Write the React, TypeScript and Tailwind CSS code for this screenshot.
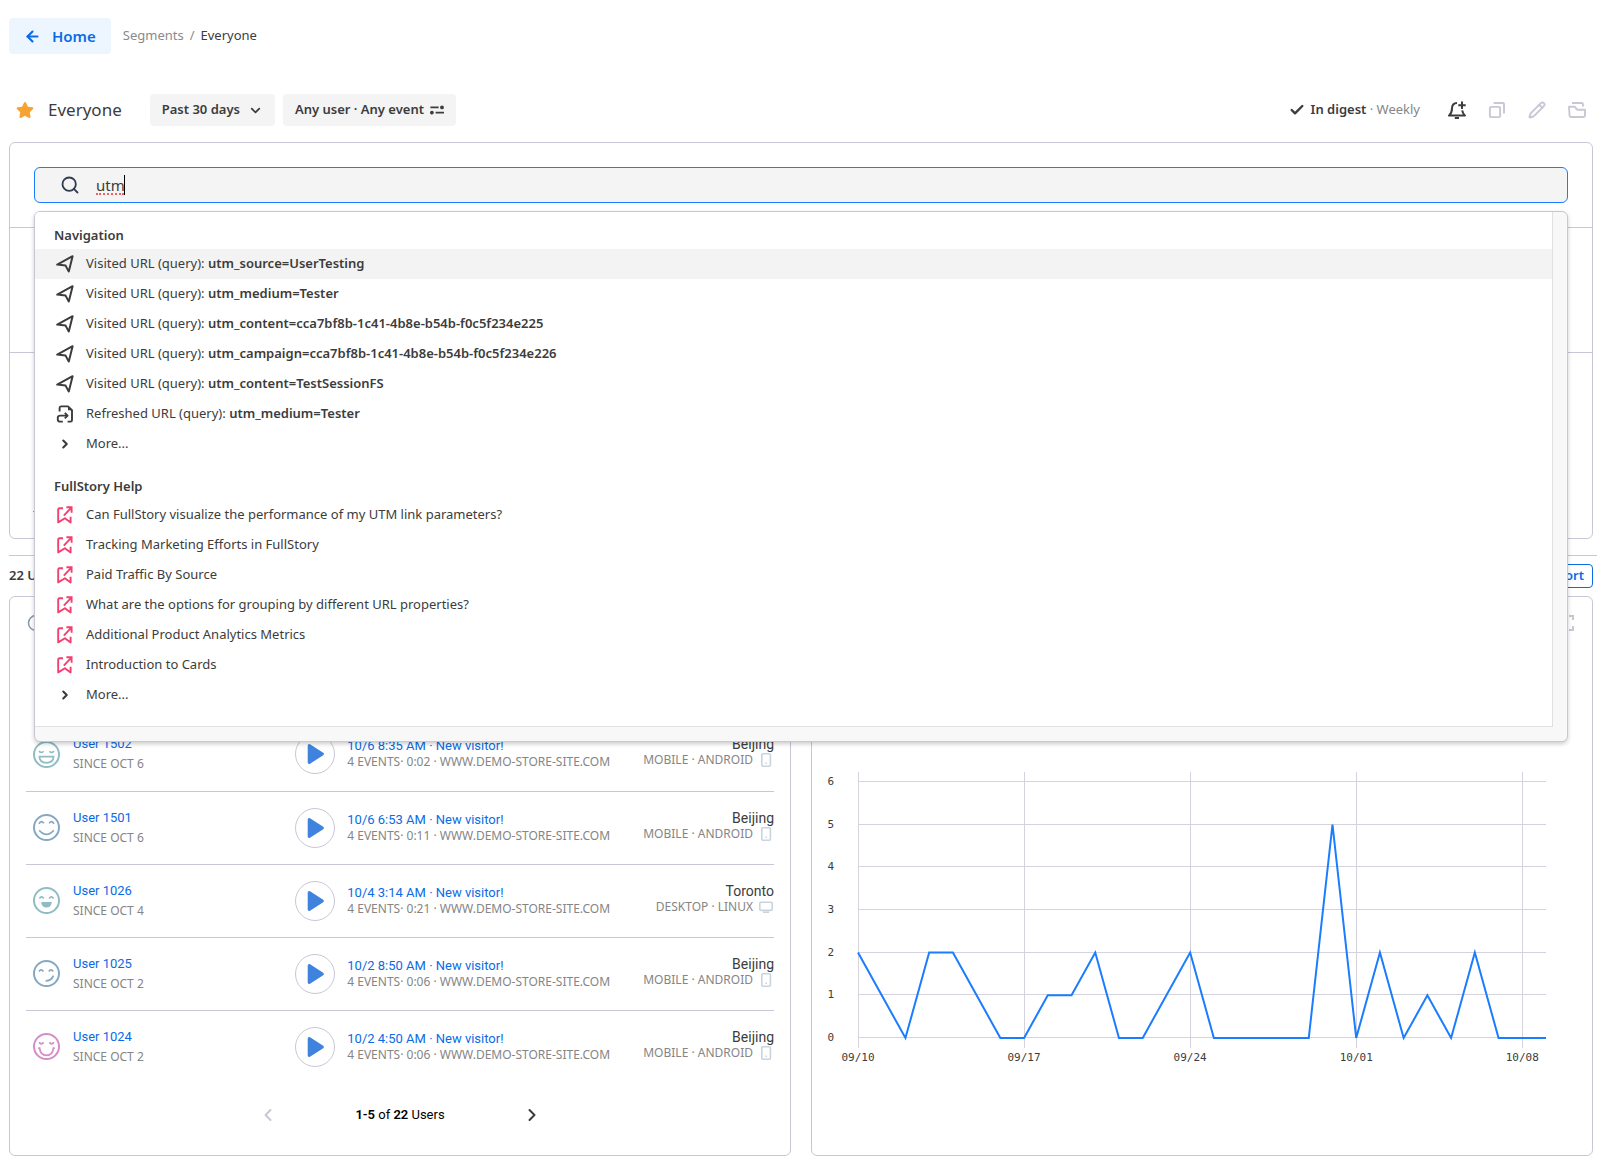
import type { ReactNode } from "react";
import { ArrowLeft, Check, ChevronDown, ChevronLeft, ChevronRight, Clock, Pencil, Search } from "lucide-react";
import { FaStar } from "react-icons/fa";

type Face = "grin" | "smile" | "laugh" | "smirk" | "joy";

const navigation = [
	{ label: "Visited URL (query):", value: "utm_source=UserTesting", kind: "visit" },
	{ label: "Visited URL (query):", value: "utm_medium=Tester", kind: "visit" },
	{ label: "Visited URL (query):", value: "utm_content=cca7bf8b-1c41-4b8e-b54b-f0c5f234e225", kind: "visit" },
	{ label: "Visited URL (query):", value: "utm_campaign=cca7bf8b-1c41-4b8e-b54b-f0c5f234e226", kind: "visit" },
	{ label: "Visited URL (query):", value: "utm_content=TestSessionFS", kind: "visit" },
	{ label: "Refreshed URL (query):", value: "utm_medium=Tester", kind: "refresh" },
];

const help = [
	"Can FullStory visualize the performance of my UTM link parameters?",
	"Tracking Marketing Efforts in FullStory",
	"Paid Traffic By Source",
	"What are the options for grouping by different URL properties?",
	"Additional Product Analytics Metrics",
	"Introduction to Cards",
];

const users: {
	name: string;
	since: string;
	face: Face;
	color: string;
	time: string;
	length: string;
	city: string;
	device: string;
}[] = [
	{ name: "User 1502", since: "OCT 6", face: "grin", color: "text-[#8fbdc3]", time: "10/6 8:35 AM", length: "0:02", city: "Beijing", device: "MOBILE · ANDROID" },
	{ name: "User 1501", since: "OCT 6", face: "smile", color: "text-[#86a8c2]", time: "10/6 6:53 AM", length: "0:11", city: "Beijing", device: "MOBILE · ANDROID" },
	{ name: "User 1026", since: "OCT 4", face: "laugh", color: "text-[#8fbdc3]", time: "10/4 3:14 AM", length: "0:21", city: "Toronto", device: "DESKTOP · LINUX" },
	{ name: "User 1025", since: "OCT 2", face: "smirk", color: "text-[#86a8c2]", time: "10/2 8:50 AM", length: "0:06", city: "Beijing", device: "MOBILE · ANDROID" },
	{ name: "User 1024", since: "OCT 2", face: "joy", color: "text-[#d68cc6]", time: "10/2 4:50 AM", length: "0:06", city: "Beijing", device: "MOBILE · ANDROID" },
];

// users per day, 09/10 to 10/09
const daily = [2, 1, 0, 2, 2, 1, 0, 0, 1, 1, 2, 0, 0, 1, 2, 0, 0, 0, 0, 0, 5, 0, 2, 0, 1, 0, 2, 0, 0, 0];
const weeks = ["09/10", "09/17", "09/24", "10/01", "10/08"];

const chartLeft = 46;
const chartRight = 734;
const chartBase = 320;
const dayStep = (chartRight - chartLeft) / (daily.length - 1);
const unitStep = 42.7;

function VisitIcon() {
	return (
		<svg width="18" height="18" viewBox="0 0 18 18" fill="none" stroke="currentColor" strokeWidth="2" strokeLinejoin="round" aria-hidden="true">
			<path d="M1.2 9.6 16.6 1.2 12.8 16.6 9.6 10.6Z" />
		</svg>
	);
}

function RefreshIcon() {
	return (
		<svg width="18" height="18" viewBox="0 0 18 18" fill="none" stroke="currentColor" strokeWidth="1.9" strokeLinejoin="round" aria-hidden="true">
			<path d="M3.6 6.6V3Q3.6 1.4 5 1.4H12L16 5.2V15Q16 16.6 14.6 16.6H11.6" />
			<path d="M6.8 16.6H4.4Q1.8 16.6 1.8 14.8V12.6Q1.8 10.6 4.4 10.6H11" />
			<path d="M8.8 7.8 11.6 10.6 8.8 13.4" />
			<path d="M12 1.4V5.2H16Z" fill="currentColor" stroke="none" />
		</svg>
	);
}

function HelpIcon() {
	return (
		<svg width="18" height="18" viewBox="0 0 18 18" fill="none" stroke="#f43f70" strokeWidth="1.9" aria-hidden="true">
			<path d="M7 2.2H3.6Q2.2 2.2 2.2 3.6V16.4L8.9 12.2 14.6 16.4V10.8" strokeLinejoin="round" />
			<path d="M7.8 9.6 15.4 1.6M10.4 1.2H15.6V6.8" />
		</svg>
	);
}

function FilterIcon() {
	return (
		<svg width="14" height="10" viewBox="0 0 14 10" stroke="currentColor" strokeWidth="1.8" aria-hidden="true">
			<path d="M.4 2.4H8.6M5.6 7.6H14" />
			<circle cx="12" cy="2.4" r="1" fill="currentColor" />
			<circle cx="1.9" cy="7.6" r="1" fill="currentColor" />
		</svg>
	);
}

function BellPlusIcon() {
	return (
		<svg width="18" height="18" viewBox="0 0 18 18" fill="none" stroke="currentColor" strokeWidth="2" aria-hidden="true">
			<path d="M9 2C5.4 2.2 4 4.4 4 7.4C4 11 3.4 12.2 1 14.6H17C15.2 12.8 14.4 11.6 14.2 9.4" strokeLinejoin="round" />
			<path d="M14 .6V8M10.3 4.3H17.7M6.8 17.1H11" />
		</svg>
	);
}

function CopyIcon() {
	return (
		<svg width="18" height="18" viewBox="0 0 18 18" fill="none" stroke="currentColor" strokeWidth="1.9" aria-hidden="true">
			<rect x="1.9" y="5.9" width="10.2" height="10.2" rx="1" />
			<path d="M5.6 2H15Q16 2 16 3V12.4" />
		</svg>
	);
}

function FolderIcon() {
	return (
		<svg width="18" height="18" viewBox="0 0 18 18" fill="none" stroke="currentColor" strokeWidth="1.9" aria-hidden="true">
			<path d="M1 5.8H6.8L9.4 8.8H17V14.6Q17 16 15.6 16H3Q1.8 16 1.6 14.6Z" strokeLinejoin="round" />
			<path d="M4 2H13.4Q15 2 15 3.4V5.6" />
		</svg>
	);
}

const faces: Record<Face, ReactNode> = {
	grin: (
		<>
			<path d="M6 10.2Q8.4 12.8 10.6 10.2M16.4 10.2Q18.6 12.8 21 10.2" />
			<path d="M6.4 15.6H20.6Q20.2 21.8 13.5 21.8T6.4 15.6Z" />
		</>
	),
	smile: (
		<>
			<path d="M6 9.8Q8.4 5.8 10.8 9.4M16.2 9.4Q18.6 5.8 21 9.8" />
			<path d="M6.2 16.4Q13.5 24.4 20.8 16.4" />
		</>
	),
	laugh: (
		<>
			<path d="M6.4 11.4Q8.6 8.2 10.8 11.4M16.2 11.4Q18.4 8.2 20.6 11.4" />
			<path d="M9.2 15.8H17.8Q17.2 19.6 13.5 19.6T9.2 15.8Z" fill="currentColor" />
		</>
	),
	smirk: (
		<>
			<path d="M6 11.4Q8.2 8.2 10.4 11.4M15.8 11.4Q18 8.2 20.2 11.4" />
			<path d="M12.6 20.8Q18.4 21 20.4 15.6" />
		</>
	),
	joy: (
		<>
			<path d="M6 9.4Q8.4 12.2 10.6 9.4M16.4 9.4Q18.6 12.2 21 9.4" />
			<path d="M5.2 15.2H6.6Q7.4 22.4 13.5 22.4T20.4 15.2H21.8" />
		</>
	),
};

function FaceIcon({ face }: { face: Face }) {
	return (
		<svg width="27" height="27" viewBox="0 0 27 27" fill="none" stroke="currentColor" strokeWidth="1.7" aria-hidden="true">
			<circle cx="13.5" cy="13.5" r="12.5" strokeWidth="2" />
			{faces[face]}
		</svg>
	);
}

function DeviceIcon({ device }: { device: string }) {
	return (
		<svg width="14" height="14" viewBox="0 0 14 14" fill="none" stroke="#c8d4de" strokeWidth="1.6" aria-hidden="true">
			{device.startsWith("DESKTOP") ? (
				<>
					<rect x=".8" y="2.2" width="12.4" height="8.2" rx="1.2" />
					<path d="M4 12.2H10" />
				</>
			) : (
				<>
					<rect x="2.8" y=".8" width="8.6" height="12.4" rx="1" />
					<path d="M6.4 10.2H7.9" />
				</>
			)}
		</svg>
	);
}

function SuggestionGroup({ title, children }: { title: string; children: ReactNode }) {
	return (
		<section className="pb-4">
			<h2 className="h-[25px] pl-[19px] font-semibold text-[13px] leading-[22px]">{title}</h2>
			<ul>{children}</ul>
		</section>
	);
}

function Suggestion({ icon, active, children }: { icon: ReactNode; active?: boolean; children: ReactNode }) {
	return (
		<li>
			<button
				type="button"
				className={`flex h-[30px] w-full items-center gap-3 pl-[21px] text-left text-[13px] ${active ? "bg-[#f3f3f3]" : ""}`}
			>
				<span className="flex w-[18px] shrink-0 justify-center">{icon}</span>
				<span>{children}</span>
			</button>
		</li>
	);
}

function Suggestions() {
	const more = <ChevronRight size={14} strokeWidth={3.6} />;

	return (
		<div className="absolute inset-x-0 top-full z-10 mt-2 overflow-hidden rounded-md border border-[#c9c7d6] bg-[#f8f8f8] pr-[14px] pb-[14px] shadow-[0_2px_4px_rgba(0,0,0,0.2)]">
			<div className="border-[#e1e1e4] border-r border-b bg-white pt-3">
				<SuggestionGroup title="Navigation">
					{navigation.map((item, i) => (
						<Suggestion key={item.value + item.kind} active={i === 0} icon={item.kind === "visit" ? <VisitIcon /> : <RefreshIcon />}>
							{item.label} <b className="font-semibold">{item.value}</b>
						</Suggestion>
					))}
					<Suggestion icon={more}>More...</Suggestion>
				</SuggestionGroup>
				<SuggestionGroup title="FullStory Help">
					{help.map((title) => (
						<Suggestion key={title} icon={<HelpIcon />}>
							{title}
						</Suggestion>
					))}
					<Suggestion icon={more}>More...</Suggestion>
				</SuggestionGroup>
			</div>
		</div>
	);
}

function SearchBox() {
	return (
		<div className="relative">
			<label htmlFor="omnisearch" className="flex h-9 items-center rounded-md border border-[#1a7cff] bg-[#f4f4f4] pl-[25px]">
				<Search size={20} strokeWidth={2.2} className="text-[#2f3e4e]" aria-label="Search" />
				<span className="relative ml-4 flex-1">
					<input
						id="omnisearch"
						type="text"
						defaultValue="utm"
						spellCheck={false}
						className="block w-full bg-transparent text-[15px] leading-6 outline-none"
					/>
					<span aria-hidden="true" className="absolute bottom-0.5 left-0 w-7 border-[#f4605c] border-b-2 border-dotted" />
					<span aria-hidden="true" className="absolute top-0.5 left-7 h-5 w-px bg-black" />
				</span>
			</label>
			<Suggestions />
		</div>
	);
}

function UsersCard() {
	return (
		<section className="rounded-md border border-[#c9c7d6] px-4 pb-2">
			<div className="h-[121px] pt-[17px] pl-px">
				<Clock size={18} strokeWidth={2} className="text-[#8795a5]" />
			</div>
			<table className="w-full table-fixed">
				<tbody>
					{users.map((user) => (
						<tr key={user.name} className="border-[#c9c7d6] border-b last:border-b-0">
							<td className="h-[73px] w-[36%]">
								<div className={`flex items-center gap-[13px] pl-[7px] ${user.color}`}>
									<FaceIcon face={user.face} />
									<div className="leading-5">
										<a href="#user" className="block font-[Roboto,sans-serif] text-[#0a6be6] text-[13px]">{user.name}</a>
										<p className="text-[#858585] text-[12px]">SINCE {user.since}</p>
									</div>
								</div>
							</td>
							<td className="w-[40%]">
								<div className="flex items-center gap-3">
									<button type="button" aria-label="Play session" className="grid size-10 shrink-0 place-items-center rounded-full border border-[#c9c7d6]">
										<svg width="18" height="22" viewBox="0 0 18 22" className="ml-0.5" fill="#3f83df" stroke="#3f83df" strokeWidth="3" strokeLinejoin="round" aria-hidden="true">
											<path d="M2.2 2.6 15.4 11 2.2 19.4Z" />
										</svg>
									</button>
									<div className="whitespace-nowrap leading-4">
										<a href="#session" className="block font-[Roboto,sans-serif] text-[#0a6be6] text-[13px]">
											{user.time} · New visitor!
										</a>
										<p className="text-[#858585] text-[12px]">4 EVENTS· {user.length} · WWW.DEMO-STORE-SITE.COM</p>
									</div>
								</div>
							</td>
							<td className="pb-1 text-right leading-4">
								<p className="font-[Roboto,sans-serif] text-[14px]">{user.city}</p>
								<p className="flex items-center justify-end gap-1.5 whitespace-nowrap pr-px text-[#858585] text-[12px]">
									{user.device}
									<DeviceIcon device={user.device} />
								</p>
							</td>
						</tr>
					))}
				</tbody>
			</table>
			<nav className="mx-auto flex h-16 w-[284px] items-center justify-between" aria-label="Users pages">
				<button type="button" aria-label="Previous page" className="text-[#c9c7d6]">
					<ChevronLeft size={20} strokeWidth={2.4} />
				</button>
				<p className="font-[Roboto,sans-serif] text-[13px] text-black">
					<b className="font-semibold">1-5</b> of <b className="font-semibold">22</b> Users
				</p>
				<button type="button" aria-label="Next page">
					<ChevronRight size={20} strokeWidth={2.4} />
				</button>
			</nav>
		</section>
	);
}

function TrendCard() {
	const points = daily.map((n, i) => `${chartLeft + i * dayStep},${chartBase - n * unitStep}`).join(" ");

	return (
		<section className="rounded-md border border-[#c9c7d6]">
			<div className="flex h-[121px] justify-end px-4 pt-4">
				<svg width="20" height="20" viewBox="0 0 20 20" fill="none" stroke="#c9c7d6" strokeWidth="2" aria-hidden="true">
					<path d="M3 7V3H7M13 3H17V7M17 13V17H13M7 17H3V13" />
				</svg>
			</div>
			<svg viewBox="0 0 780 370" className="block w-full font-['DejaVu_Sans_Mono',monospace] text-[11px]" fill="#3c3c3c" role="img" aria-label="Users per day">
				<g stroke="#d3d2dd">
					{[0, 1, 2, 3, 4, 5, 6].map((n) => (
						<line key={n} x1={chartLeft} x2={chartRight} y1={Math.round(chartBase - n * unitStep) - 0.5} y2={Math.round(chartBase - n * unitStep) - 0.5} />
					))}
					{weeks.map((week, i) => (
						<line key={week} x1={Math.round(chartLeft + i * 7 * dayStep) + 0.5} x2={Math.round(chartLeft + i * 7 * dayStep) + 0.5} y1="54" y2="330" />
					))}
				</g>
				{[0, 1, 2, 3, 4, 5, 6].map((n) => (
					<text key={n} x="22" y={Math.round(chartBase - n * unitStep) + 3} textAnchor="end">{n}</text>
				))}
				{weeks.map((week, i) => (
					<text key={week} x={chartLeft + i * 7 * dayStep} y="343" textAnchor="middle">{week}</text>
				))}
				<polyline points={points} fill="none" stroke="#1a7cff" strokeWidth="2" />
			</svg>
		</section>
	);
}

export default function App() {
	return (
		<main className="bg-white pt-[18px] pr-1.5 pb-0.5 pl-[9px] font-['Noto_Sans',sans-serif] text-[#3c3c3c]">
			<header className="flex items-center gap-3 text-[13px]">
				<a href="#home" className="flex h-9 items-center gap-[11px] rounded bg-[#edf6ff] pr-[15px] pl-[15px] font-semibold text-[#0a6be6] text-[15px]">
					<ArrowLeft size={17} strokeWidth={3} />
					Home
				</a>
				<nav className="flex gap-1.5" aria-label="Breadcrumb">
					<a href="#segments" className="text-[#8a8a8a]">Segments</a>
					<span className="text-[#8a8a8a]">/</span>
					<span>Everyone</span>
				</nav>
			</header>

			<div className="mt-10 flex h-8 items-center pr-[7px] pl-[7px] text-[13px]">
				<FaStar size={18} className="text-[#f7a233]" />
				<h1 className="ml-3.5 text-[17px]">Everyone</h1>
				<button type="button" className="ml-7 flex h-8 items-center gap-2 rounded bg-[#f4f4f4] px-3 font-semibold">
					Past 30 days
					<ChevronDown size={15} strokeWidth={2.8} />
				</button>
				<button type="button" className="ml-2 flex h-8 items-center gap-1.5 rounded bg-[#f4f4f4] px-3 font-semibold">
					Any user · Any event
					<FilterIcon />
				</button>
				<Check size={16} strokeWidth={3.6} className="ml-auto" />
				<p className="ml-1.5 text-[#858585]">
					<b className="font-semibold text-[#3c3c3c]">In digest</b> · Weekly
				</p>
				<div className="ml-7 flex gap-[22px] text-[#c9c7d6]">
					<button type="button" aria-label="Add alert" className="text-[#3c3c3c]"><BellPlusIcon /></button>
					<button type="button" aria-label="Duplicate"><CopyIcon /></button>
					<button type="button" aria-label="Edit"><Pencil size={18} strokeWidth={2.6} /></button>
					<button type="button" aria-label="Move to folder"><FolderIcon /></button>
				</div>
			</div>

			<section className="mt-4 rounded-md border border-[#c9c7d6]">
				<div className="p-6">
					<SearchBox />
				</div>
				<div className="h-[125px] border-[#c9c7d6] border-t" />
				<div className="flex h-[186px] items-end border-[#c9c7d6] border-t px-[23px] pb-[26px]">
					<span className="h-px w-2 bg-[#9a9a9a]" />
				</div>
			</section>

			<div className="-mr-1 mt-4 flex items-center justify-between border-[#c9c7d6] border-t py-2 pr-1 text-[13px]">
				<b className="font-semibold">22 Users</b>
				<button type="button" className="h-6 rounded border border-[#0a6be6] px-2 font-semibold text-[#0a6be6]">Export</button>
			</div>

			<div className="grid grid-cols-2 gap-5">
				<UsersCard />
				<TrendCard />
			</div>
		</main>
	);
}
